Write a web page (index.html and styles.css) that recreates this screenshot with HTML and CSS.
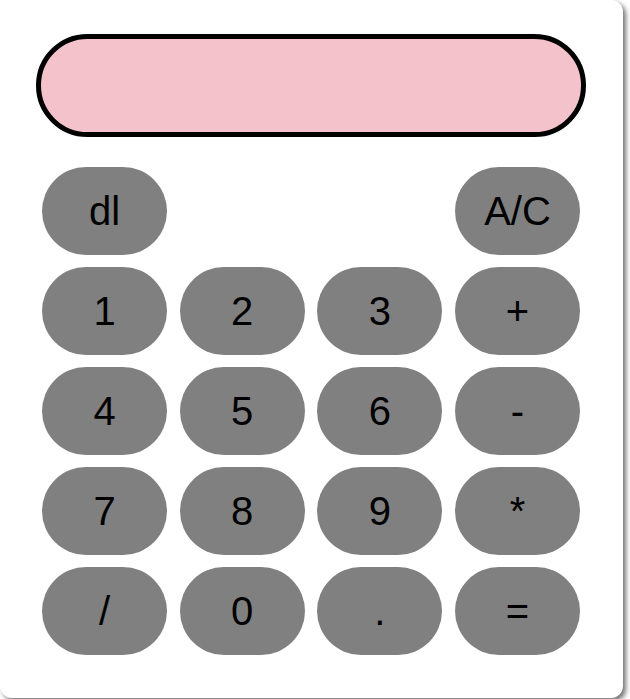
FILE: index.html
```html
<!DOCTYPE html>
<html>
<head>
<meta charset="utf-8">
<link rel="stylesheet" href="styles.css">
</head>
<body>
<div class="calc">
  <div class="display"></div>
  <div class="keys">
    <button class="key">dl</button>
    <button class="key col4">A/C</button>
    <button class="key">1</button>
    <button class="key">2</button>
    <button class="key">3</button>
    <button class="key">+</button>
    <button class="key">4</button>
    <button class="key">5</button>
    <button class="key">6</button>
    <button class="key">-</button>
    <button class="key">7</button>
    <button class="key">8</button>
    <button class="key">9</button>
    <button class="key">*</button>
    <button class="key">/</button>
    <button class="key">0</button>
    <button class="key">.</button>
    <button class="key">=</button>
  </div>
</div>
</body>
</html>
```
FILE: styles.css
```css
html, body {
  margin: 0;
  padding: 0;
  background: #ffffff;
}
body {
  width: 630px;
  height: 699px;
  overflow: hidden;
}
.calc {
  box-sizing: border-box;
  width: 623px;
  height: 698px;
  background: #ffffff;
  border-radius: 0 12px 12px 12px;
  box-shadow: 3px 3px 5px rgba(0, 0, 0, 0.55);
  padding: 34px 0 0 36px;
}
.display {
  box-sizing: border-box;
  width: 550px;
  height: 103px;
  border: 5px solid #000;
  border-radius: 52px;
  background: #f4c2cb;
}
.keys {
  margin: 30px 0 0 6px;
  width: 538px;
  display: grid;
  grid-template-columns: repeat(4, 125px);
  grid-auto-rows: 88px;
  justify-content: space-between;
  row-gap: 12px;
}
.key {
  border: none;
  margin: 0;
  padding: 0;
  background: #808080;
  border-radius: 44px;
  font-family: "Liberation Sans", Arial, sans-serif;
  font-size: 40px;
  color: #000;
  display: flex;
  align-items: center;
  justify-content: center;
}
.col4 {
  grid-column: 4;
}
```
